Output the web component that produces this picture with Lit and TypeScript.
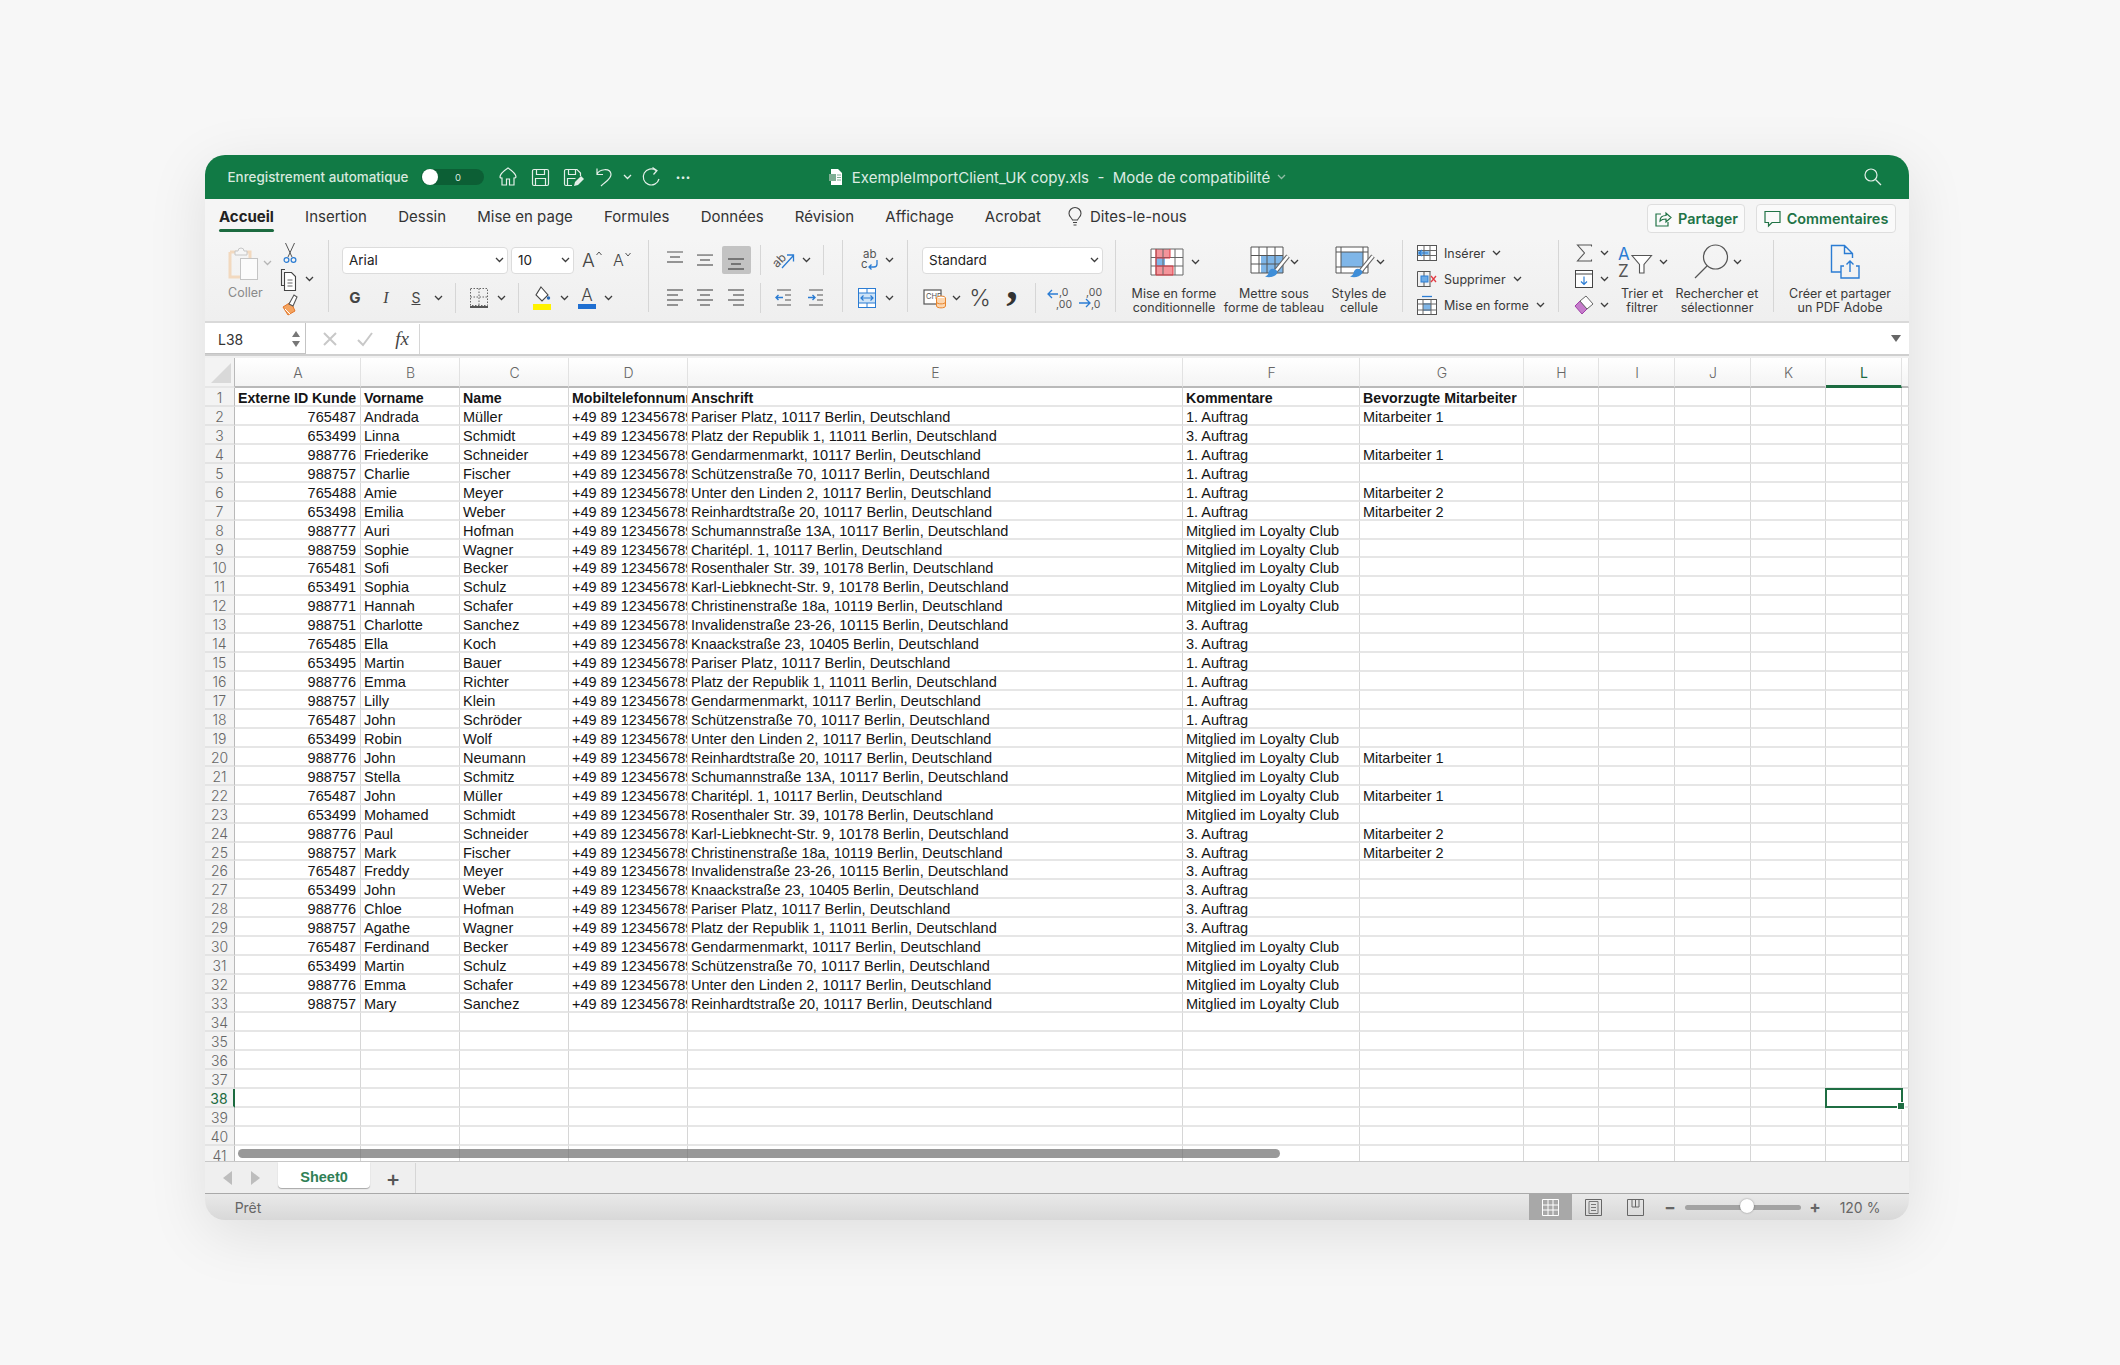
import { LitElement, html, svg, css, TemplateResult } from "lit";
import { customElement } from "lit/decorators.js";

type Slot = [number, number, TemplateResult | string];

// places items by their centre x, in flow, using margins worked out from the previous item
const slots = (left: number, items: Slot[]) => {
  let cur = left;
  return items.map(([cx, w, t]) => {
    const ml = cx - w / 2 - cur;
    cur = cx + w / 2;
    return html`<span class="slot" style="margin-left:${ml}px;width:${w}px">${t}</span>`;
  });
};

const chevOf = (color: string) => html`<svg width="9" height="6" viewBox="0 0 9 6"><path d="M1 1l3.5 3.5L8 1" fill="none" stroke=${color} stroke-width="1.3"/></svg>`;
const chev = chevOf("#3d3d3d");
const sep = html`<i class="sep"></i>`;

const lines = (rows: [number, number, number][], color = "#555") => html`<svg width="20" height="22" viewBox="0 0 20 22">${rows.map(
  ([y, x1, x2]) => svg`<path d="M${x1} ${y}H${x2}" stroke=${color} stroke-width="1.2"/>`)}</svg>`;

const alignTop = lines([[3, 2, 18], [8, 5, 15], [13, 2, 18]]);
const alignMid = lines([[6, 2, 18], [11, 5, 15], [16, 2, 18]]);
const alignBot = lines([[10, 2, 18], [15, 5, 15], [20, 2, 18]], "#444");
const alignL = lines([[3, 2, 18], [8, 2, 13], [13, 2, 18], [18, 2, 13]]);
const alignC = lines([[3, 2, 18], [8, 5, 15], [13, 2, 18], [18, 5, 15]]);
const alignR = lines([[3, 2, 18], [8, 7, 18], [13, 2, 18], [18, 7, 18]]);

const indentL = html`<svg width="20" height="22" viewBox="0 0 20 22"><path d="M3 3h14M11 8h6M11 13h6M3 18h14" stroke="#555" stroke-width="1.2"/><path d="M9 10.5H2M4.5 8l-2.5 2.5L4.5 13" fill="none" stroke="#2b7cd3" stroke-width="1.4"/></svg>`;
const indentR = html`<svg width="20" height="22" viewBox="0 0 20 22"><path d="M3 3h14M11 8h6M11 13h6M3 18h14" stroke="#555" stroke-width="1.2"/><path d="M2 10.5h7M6.5 8L9 10.5 6.5 13" fill="none" stroke="#2b7cd3" stroke-width="1.4"/></svg>`;

const orient = html`<svg width="24" height="24" viewBox="0 0 24 24"><text x="0" y="17" font-size="12" fill="#555" font-family="Inter" transform="rotate(-45 6 14)">ab</text><path d="M9 20L20 8M14 7h6.5v6.5" fill="none" stroke="#2b7cd3" stroke-width="1.3"/></svg>`;
const wrap = html`<svg width="18" height="24" viewBox="0 0 18 24"><text x="2" y="10" font-size="11.5" fill="#555" font-family="Inter">ab</text><text x="0" y="20" font-size="11.5" fill="#555" font-family="Inter">c</text><path d="M16 12v4q0 3-3 3H8M10.5 16.5L8 19l2.5 2.5" fill="none" stroke="#2b7cd3" stroke-width="1.3"/></svg>`;
const merge = html`<svg width="18" height="20" viewBox="0 0 18 20"><rect x=".5" y=".5" width="17" height="19" fill="#fff" stroke="#2b7cd3"/><rect x="1" y="5" width="16" height="10" fill="#cfe4f7"/><path d="M.5 5h17M.5 15h17M9 .5v4.500M9 15v4.500" stroke="#2b7cd3"/><path d="M3 10h12M5.500 7.500L3 10l2.500 2.500M12.500 7.500L15 10l-2.500 2.500" fill="none" stroke="#2b7cd3" stroke-width="1.2"/></svg>`;

const paste = html`<svg width="34" height="34" viewBox="0 0 34 34"><path d="M4 6h7M21 6h3v6M4 6v25h10" fill="none" stroke="#f2d9bf" stroke-width="3"/><path d="M9 5h3a3 3 0 0 1 6 0h3v4H9z" fill="#f6f6f6" stroke="#c6c6c6"/><rect x="14.500" y="12.500" width="17" height="21" fill="#fbfbfb" stroke="#c4c4c4"/></svg>`;
const scissors = html`<svg width="16" height="22" viewBox="0 0 16 22"><path d="M3.500 1l6.500 14M12.500 1L6 15" fill="none" stroke="#555" stroke-width="1"/><circle cx="4.500" cy="18" r="2.400" fill="none" stroke="#2b7cd3" stroke-width="1.200"/><circle cx="11.500" cy="18" r="2.400" fill="none" stroke="#2b7cd3" stroke-width="1.200"/></svg>`;
const copy = html`<svg width="18" height="24" viewBox="0 0 18 24"><path d="M5 2.500H1.500v16H5" fill="none" stroke="#444" stroke-width="1.1"/><path d="M4.500 5.500h7l4 4v14h-11z" fill="#fff" stroke="#444" stroke-width="1.1"/><path d="M7.500 13h5M7.500 16h5M7.500 19h5" stroke="#666"/></svg>`;
const painter = html`<svg width="20" height="24" viewBox="0 0 20 24"><path d="M11 9l-8 5 5 8 7-4z" fill="#f4a35f" stroke="#e2762a"/><path d="M9 11l5-9 3 2-4 9z" fill="#fff" stroke="#555" stroke-width="1.1"/><path d="M5 16l5 5" stroke="#fff"/></svg>`;

const fill = html`<svg width="20" height="26" viewBox="0 0 20 26"><path d="M9 2l7 8-6 6-6-6z" fill="#fff" stroke="#444" stroke-width="1.100"/><circle cx="16.500" cy="13" r="1.700" fill="#2b6cb8"/><rect x="1" y="19" width="18" height="6" fill="#fff200"/></svg>`;
const borders = html`<svg width="20" height="22" viewBox="0 0 20 22"><path d="M1.500 1.500h17v17h-17zM10 1.500v17M1.500 10h17" fill="none" stroke="#666" stroke-dasharray="1.500 1.500"/><path d="M1 20h18" stroke="#222" stroke-width="1.500"/></svg>`;

const currency = html`<svg width="24" height="22" viewBox="0 0 24 22"><rect x="1" y="3" width="17" height="14" fill="#fff" stroke="#555" stroke-width="1.200"/><text x="3" y="12" font-size="7.500" fill="#555" font-family="Inter">CHF</text><ellipse cx="18" cy="11" rx="4.500" ry="2" fill="#fff" stroke="#e8842c"/><path d="M13.500 11v8c0 2.500 9 2.500 9 0v-8M13.500 15c0 2.500 9 2.500 9 0" fill="#fbd6b0" stroke="#e8842c"/></svg>`;
const decLess = html`<svg width="24" height="24" viewBox="0 0 24 24"><text x="12" y="10" font-size="10.500" fill="#555" font-family="Inter">,0</text><text x="9" y="22" font-size="10.500" fill="#555" font-family="Inter">,00</text><path d="M11 8H1M5 4L1 8l4 4" fill="none" stroke="#2b7cd3" stroke-width="1.300"/></svg>`;
const decMore = html`<svg width="24" height="24" viewBox="0 0 24 24"><text x="8" y="10" font-size="10.500" fill="#555" font-family="Inter">,00</text><text x="13" y="22" font-size="10.500" fill="#555" font-family="Inter">,0</text><path d="M1 17h11M8 13l4 4-4 4" fill="none" stroke="#2b7cd3" stroke-width="1.300"/></svg>`;

const grid34 = svg`<path d="M1 1h32v26H1zM1 9.500h32M1 18h32M9 1v26M17 1v26M25 1v26" fill="none" stroke="#555"/>`;
const brush = svg`<path d="M38 10L25 26" stroke="#666" stroke-width="4.500"/><path d="M38 10L25 26" stroke="#fff" stroke-width="2.500"/><path d="M26 24c-4-3-7 0-7.500 3-.3 2-2 3-3.500 3.500 4 1.500 10 .5 12-3 .7-1.300 .5-2.500-1-3.500z" fill="#3f8ed8"/>`;
const condFmt = html`<svg width="34" height="28" viewBox="0 0 34 28"><rect x="1" y="1" width="32" height="26" fill="#fff"/><rect x="6" y="1" width="14" height="9" fill="#f4949a"/><rect x="6" y="10" width="9" height="8" fill="#7fb6e8"/><rect x="6" y="18" width="17" height="9" fill="#f4949a"/><path d="M1 1h32v26H1zM1 9.500h32M1 18h32M6 1v26M13 1v26M25 1v26" fill="none" stroke="#666"/><path d="M6 1v26M20 1v9M23 18v9M6 10h14M6 18h17M6 27h17" fill="none" stroke="#e23b44"/></svg>`;
const tableFmt = html`<svg width="38" height="32" viewBox="0 0 38 32"><rect x="1" y="1" width="32" height="26" fill="#fff"/><rect x="11" y="9.500" width="22" height="17.500" fill="#7fb6e8"/>${grid34}${brush}</svg>`;
const cellFmt = html`<svg width="38" height="32" viewBox="0 0 38 32"><rect x="1" y="1" width="32" height="26" fill="#fff"/><rect x="6" y="6" width="22" height="15" fill="#7fb6e8"/><path d="M1 1h32v26H1zM1 6h32M1 21h32M6 1v26M28 1v26" fill="none" stroke="#555"/>${brush}</svg>`;

const insertIc = html`<svg width="20" height="18" viewBox="0 0 20 18"><rect x=".5" y="1.500" width="19" height="15" fill="#fff" stroke="#555"/><rect x="1" y="6" width="12" height="6" fill="#8cc0ec"/><path d="M.5 6.500h19M.5 11.500h19M7 1.500v15M13 1.500v15" stroke="#666"/><path d="M11 9H2M5 6L2 9l3 3" fill="none" stroke="#2b7cd3" stroke-width="1.200"/></svg>`;
const deleteIc = html`<svg width="20" height="18" viewBox="0 0 20 18"><path d="M.5 1.500h13M.5 16.500h13M.5 1.500v15M7 1.500v15M13 1.500v15" fill="none" stroke="#555"/><rect x="4" y="6" width="7" height="6" fill="#6aaae6" stroke="#2b7cd3"/><path d="M14 6l5 6M19 6l-5 6" stroke="#e23b44" stroke-width="1.300"/></svg>`;
const formatIc = html`<svg width="20" height="20" viewBox="0 0 20 20"><rect x=".5" y="4.500" width="19" height="15" fill="#fff" stroke="#555"/><rect x="6" y="8" width="8" height="8" fill="#7fb6e8"/><path d="M.5 9h19M.5 15h19M6 4.500v15M14 4.500v15" stroke="#666"/><path d="M5 1.500h10" stroke="#2b7cd3" stroke-width="1.300"/></svg>`;
const sumIc = html`<svg width="17" height="18" viewBox="0 0 17 18"><path d="M15.500 2.500V1H1.500l7 8-7 8h14v-1.500" fill="none" stroke="#555" stroke-width="1.100"/></svg>`;
const fillDown = html`<svg width="18" height="18" viewBox="0 0 18 18"><rect x=".5" y=".5" width="17" height="17" fill="#fff" stroke="#444"/><path d="M.5 4h17" stroke="#444"/><path d="M9 6.500v8M6 11.500l3 3 3-3" fill="none" stroke="#2b7cd3" stroke-width="1.200"/></svg>`;
const eraser = html`<svg width="20" height="20" viewBox="0 0 20 20"><path d="M1 11l7 8 5-5-7-8z" fill="#c57ccb" stroke="#a03fa8"/><path d="M6 6l6-5 7 8-6 5z" fill="#fff" stroke="#666"/></svg>`;
const sortIc = html`<svg width="34" height="32" viewBox="0 0 34 32"><text x="0" y="14" font-size="17" fill="#2b7cd3" font-family="Inter">A</text><text x="0" y="31" font-size="17" fill="#555" font-family="Inter">Z</text><path d="M14 9.500h19.500l-7.500 9v8.500h-4.500v-8.500z" fill="#fff" stroke="#555" stroke-width="1.100"/></svg>`;
const searchIc = html`<svg width="36" height="36" viewBox="0 0 36 36"><circle cx="22.500" cy="13" r="12" fill="none" stroke="#555" stroke-width="1.200"/><path d="M14 22L2 34" stroke="#555" stroke-width="1.200"/></svg>`;
const pdfIc = html`<svg width="32" height="36" viewBox="0 0 32 36"><path d="M12 28H2.500V1.500h13l8 8V14M15.500 1.500v8h8" fill="none" stroke="#2b7cd3" stroke-width="1.400"/><path d="M15 22h-3v12h18V22h-3M21 28V17M17.500 20.500L21 17l3.500 3.500" fill="none" stroke="#2b7cd3" stroke-width="1.400"/></svg>`;
const bulb = html`<svg width="14" height="20" viewBox="0 0 14 20"><path d="M4.500 13C3.500 10.500 1 9.500 1 6.500a6 6 0 0 1 12 0c0 3-2.500 4-3.500 6.500zM5 15.500h4M5.500 18h3" fill="none" stroke="#444" stroke-width="1.100"/></svg>`;
const shareIc = html`<svg width="18" height="18" viewBox="0 0 18 18"><path d="M7 4H2v12h12v-4" fill="none" stroke="#217346" stroke-width="1.200"/><path d="M6 11c0-4 3-5.500 6-5.500V3l5 4.500-5 4.500V9c-2.500 0-4.500 .5-6 2z" fill="none" stroke="#217346" stroke-width="1.200"/></svg>`;
const commentIc = html`<svg width="17" height="17" viewBox="0 0 17 17"><path d="M1 1.500h15v11H8L4.500 16v-3.500H1z" fill="none" stroke="#217346" stroke-width="1.200"/></svg>`;

const wh = "#e3efe8";
const homeIc = html`<svg width="20" height="20" viewBox="0 0 20 20"><path d="M2 10c0-3 5-7 8-9 3 2 8 6 8 9 0 1-1 1-2 1v7h-4.500v-6h-3v6H4v-7c-1 0-2 0-2-1z" fill="none" stroke=${wh} stroke-width="1.200"/></svg>`;
const saveIc = html`<svg width="19" height="19" viewBox="0 0 19 19"><path d="M3 1.500h13a1.500 1.500 0 0 1 1.500 1.500v13a1.500 1.500 0 0 1-1.500 1.500H3A1.500 1.500 0 0 1 1.500 16V3A1.500 1.500 0 0 1 3 1.500zM5.500 1.500v5h8v-5M4.500 17.500v-7h10v7" fill="none" stroke=${wh} stroke-width="1.200"/></svg>`;
const saveAsIc = html`<svg width="21" height="19" viewBox="0 0 21 19"><path d="M9 17.500H3A1.500 1.500 0 0 1 1.500 16V3A1.500 1.500 0 0 1 3 1.500h11L17.500 5v3M5.500 1.500v5h7v-5M4.500 17v-6.500h8" fill="none" stroke=${wh} stroke-width="1.200"/><path d="M11 18l1-4 6-6 3 3-6 6z" fill=${wh}/></svg>`;
const undoIc = html`<svg width="20" height="22" viewBox="0 0 20 22"><path d="M3 8.500C5 3 16 1.500 17 8c.5 5-6 8-10 12M3 2.500v6h6" fill="none" stroke=${wh} stroke-width="1.200"/></svg>`;
const redoIc = html`<svg width="20" height="22" viewBox="0 0 20 22"><path d="M15 4.500A8 8 0 1 0 18 13M11.500 1.500L16 4.500l-3.500 4" fill="none" stroke=${wh} stroke-width="1.200"/></svg>`;
const fileIc = html`<svg width="16" height="18" viewBox="0 0 16 18"><path d="M3 1h7l4 4v12H3z" fill="#fff"/><rect x="1" y="6" width="7" height="7" fill="#7fae94"/><path d="M9 7h4M9 9.500h4M9 12h4" stroke="#7fae94"/></svg>`;
const glass = html`<svg width="20" height="20" viewBox="0 0 20 20"><circle cx="8" cy="8" r="6" fill="none" stroke=${wh} stroke-width="1.200"/><path d="M12.500 12.500L18 18" stroke=${wh} stroke-width="1.200"/></svg>`;

const people = [
  ["765487", "Andrada", "Müller"], ["653499", "Linna", "Schmidt"], ["988776", "Friederike", "Schneider"], ["988757", "Charlie", "Fischer"],
  ["765488", "Amie", "Meyer"], ["653498", "Emilia", "Weber"], ["988777", "Auri", "Hofman"], ["988759", "Sophie", "Wagner"],
  ["765481", "Sofi", "Becker"], ["653491", "Sophia", "Schulz"], ["988771", "Hannah", "Schafer"], ["988751", "Charlotte", "Sanchez"],
  ["765485", "Ella", "Koch"], ["653495", "Martin", "Bauer"], ["988776", "Emma", "Richter"], ["988757", "Lilly", "Klein"],
  ["765487", "John", "Schröder"], ["653499", "Robin", "Wolf"], ["988776", "John", "Neumann"], ["988757", "Stella", "Schmitz"],
  ["765487", "John", "Müller"], ["653499", "Mohamed", "Schmidt"], ["988776", "Paul", "Schneider"], ["988757", "Mark", "Fischer"],
  ["765487", "Freddy", "Meyer"], ["653499", "John", "Weber"], ["988776", "Chloe", "Hofman"], ["988757", "Agathe", "Wagner"],
  ["765487", "Ferdinand", "Becker"], ["653499", "Martin", "Schulz"], ["988776", "Emma", "Schafer"], ["988757", "Mary", "Sanchez"],
];
// the addresses simply repeat down the sheet
const addr = [
  "Pariser Platz, 10117 Berlin, Deutschland", "Platz der Republik 1, 11011 Berlin, Deutschland", "Gendarmenmarkt, 10117 Berlin, Deutschland",
  "Schützenstraße 70, 10117 Berlin, Deutschland", "Unter den Linden 2, 10117 Berlin, Deutschland", "Reinhardtstraße 20, 10117 Berlin, Deutschland",
  "Schumannstraße 13A, 10117 Berlin, Deutschland", "Charitépl. 1, 10117 Berlin, Deutschland", "Rosenthaler Str. 39, 10178 Berlin, Deutschland",
  "Karl-Liebknecht-Str. 9, 10178 Berlin, Deutschland", "Christinenstraße 18a, 10119 Berlin, Deutschland", "Invalidenstraße 23-26, 10115 Berlin, Deutschland",
  "Knaackstraße 23, 10405 Berlin, Deutschland",
];
const A1 = "1. Auftrag", A3 = "3. Auftrag", L = "Mitglied im Loyalty Club";
const comments = [A1, A3, A1, A1, A1, A1, L, L, L, L, L, A3, A3, A1, A1, A1, A1, L, L, L, L, L, A3, A3, A3, A3, A3, A3, L, L, L, L];
const staff: Record<number, string> = { 0: "Mitarbeiter 1", 2: "Mitarbeiter 1", 4: "Mitarbeiter 2", 5: "Mitarbeiter 2", 18: "Mitarbeiter 1", 20: "Mitarbeiter 1", 22: "Mitarbeiter 2", 23: "Mitarbeiter 2" };
const headers = ["Externe ID Kunde", "Vorname", "Name", "Mobiltelefonnummer", "Anschrift", "Kommentare", "Bevorzugte Mitarbeiter"];
const cols = ["A", "B", "C", "D", "E", "F", "G", "H", "I", "J", "K", "L", ""];
const tabs = ["Insertion", "Dessin", "Mise en page", "Formules", "Données", "Révision", "Affichage", "Acrobat"];

@customElement("app-root")
export class AppRoot extends LitElement {
  static styles = css`
    :host {
      display: block;
      width: 2120px;
      height: 1365px;
      box-sizing: border-box;
      padding: 155px 211px 0 205px;
      background: #f7f7f7;
      font-family: Inter, "Liberation Sans", sans-serif;
      color: #333;
    }
    svg { display: block; flex: none; overflow: visible; }
    .win {
      height: 1065px;
      border-radius: 20px;
      overflow: hidden;
      background: #f0f0f0;
      display: flex;
      flex-direction: column;
      box-shadow: 0 14px 60px rgba(0, 0, 0, 0.1);
    }
    .slot { display: inline-flex; align-items: center; justify-content: center; flex: none; height: 100%; white-space: nowrap; }
    .sep { display: block; width: 1px; height: 30px; background: #d6d6d6; }

    .title { height: 44px; flex: none; background: #117a45; color: #e3efe8; display: flex; align-items: center; font-size: 13px; }
    .auto { font-size: 13.4px; font-weight: 500; color: #d7e8de; }
    .toggle { width: 63px; height: 16px; border-radius: 8px; background: #0c5f35; position: relative; display: flex; align-items: center; justify-content: center; font-size: 9.5px; color: #d7e8de; padding-left: 12px; box-sizing: border-box; }
    .toggle::before { content: ""; position: absolute; left: 1px; top: 0; width: 16px; height: 16px; border-radius: 50%; background: #fff; }
    .dots { font-size: 15px; font-weight: 700; letter-spacing: 0; }
    .doc { font-size: 15px; color: #dcebe2; }

    .tabs { height: 39px; flex: none; box-sizing: border-box; padding-bottom: 4px; background: #f5f5f5; display: flex; align-items: center; font-size: 15px; color: #333; }
    .tab-row { display: flex; gap: 31.2px; padding-left: 14px; align-items: center; }
    .tab-on { font-weight: 700; color: #222; position: relative; }
    .tab-on::after { content: ""; position: absolute; left: 0; right: 0; bottom: -6px; height: 3px; border-radius: 2px; background: #1c6b40; }
    .tell { display: flex; align-items: center; gap: 8px; margin-left: -4px; }
    .spacer { flex: 1; }
    .btn { height: 29px; box-sizing: border-box; background: #fafafa; border: 1px solid #dedede; border-radius: 4px; display: flex; align-items: center; justify-content: center; gap: 6px; color: #217346; font-weight: 600; font-size: 14.4px; margin-top: 4px; }
    .share { width: 98px; margin-right: 11px; }
    .comm { width: 140px; margin-right: 13px; }

    .ribbon { height: 85px; flex: none; box-sizing: border-box; border-bottom: 2px solid #d9d9d9; background: linear-gradient(#f5f5f5, #efefef); display: flex; padding-top: 2px; font-size: 12.5px; color: #3a3a3a; }
    .grp { height: 72px; flex: none; box-sizing: border-box; border-right: 1px solid #d6d6d6; display: flex; flex-direction: column; }
    .grp:last-child { border: 0; }
    .g-clip { width: 124px; flex-direction: row; }
    .g-font { width: 320px; }
    .g-align { width: 194px; }
    .g-wrap { width: 65px; }
    .g-num { width: 208px; }
    .g-style { width: 287px; }
    .g-cells { width: 156px; }
    .g-edit { width: 215px; flex-direction: row; }
    .g-pdf { width: 135px; }
    .r1 { height: 40px; flex: none; display: flex; box-sizing: border-box; }
    .low { padding-top: 4px; }
    .r2 { height: 34px; flex: none; display: flex; padding-top: 1px; box-sizing: border-box; }
    .r3 { height: 26px; flex: none; display: flex; }
    .r-lab { display: flex; flex: none; margin-top: 7px; }
    .clip-l { width: 75px; flex: none; display: flex; flex-direction: column; }
    .clip-r { width: 49px; flex: none; display: flex; flex-direction: column; }
    .edit-l { width: 53px; flex: none; display: flex; flex-direction: column; }
    .edit-r { flex: 1; display: flex; flex-direction: column; }
    .paste { height: 46px; flex: none; display: flex; }
    .coller { color: #8a8a8a; font-size: 12.5px; line-height: 14px; margin-left: 23px; }
    .lab { display: block; text-align: center; line-height: 14px; font-size: 12.5px; color: #3a3a3a; white-space: normal; }
    .cell-t { width: 100%; text-align: left; }
    .combo { width: 100%; height: 27px; box-sizing: border-box; background: #fff; border: 1px solid #dcdcdc; border-radius: 4px; display: flex; align-items: center; justify-content: space-between; padding: 0 3px 0 6px; font-size: 13.5px; color: #222; }
    .grow { font-weight: 300; color: #444; display: flex; align-items: flex-start; gap: 1px; line-height: 1; }
    .big-a { font-size: 19px; }
    .small-a { font-size: 16px; }
    .pick { background: #c3c3c3; height: 28px; display: flex; align-items: center; justify-content: center; width: 100%; border-radius: 2px; }
    .b-g { font-weight: 700; font-size: 15px; color: #444; }
    .b-i { font-family: "Liberation Serif", serif; font-style: italic; font-size: 16px; color: #444; }
    .b-s { font-size: 14px; color: #444; text-decoration: underline; }
    .col-a { display: flex; flex-direction: column; width: 18px; align-items: center; font-size: 17px; line-height: 16px; color: #444; font-weight: 300; }
    .col-a i { display: block; width: 18px; height: 5px; margin-top: 1px; background: #1f6fd1; }
    .pct { font-size: 23px; font-weight: 300; color: #444; }
    .comma { font-family: "Liberation Serif", serif; font-weight: 700; font-size: 46px; color: #333; line-height: 1; transform: translateY(-14px); }

    .fbar { height: 33px; flex: none; box-sizing: border-box; background: #fff; border-bottom: 2px solid #cfcfcf; display: flex; align-items: center; }
    .namebox { width: 101px; height: 100%; box-sizing: border-box; border-right: 1px solid #c4c4c4; border-bottom: 1px solid #c4c4c4; background: #fff; display: flex; align-items: center; justify-content: space-between; padding: 2px 5px 0 13px; font-size: 14px; color: #333; }
    .step { display: flex; flex-direction: column; gap: 4px; }
    .fx { font-family: "Liberation Serif", serif; font-style: italic; font-size: 19px; color: #444; }

    .sheet { height: 804px; flex: none; margin-top: 2px; background: #fff; position: relative; overflow: hidden; font-family: "Liberation Sans", Arial, sans-serif; font-size: 14.5px; color: #151515; border-bottom: 1px solid #c8c8c8; box-sizing: border-box; }
    .grid { display: grid; grid-template-columns: 30px 126px 99px 109px 119px 495px 177px 164px 75px 76px 76px 75px 76px 7px; grid-template-rows: 30px repeat(41, 18.94px); }
    .c { box-sizing: border-box; border-right: 1px solid #d6d6d6; border-bottom: 2px solid #e6e6e6; overflow: clip visible; white-space: nowrap; padding: 0 3px; line-height: 20px; position: relative; }
    .c.num { text-align: right; padding-right: 4px; }
    .b { font-weight: 700; font-size: 14.2px; }
    .ch { background: linear-gradient(#fff, #f4f4f4); border-right: 1px solid #e2e2e2; border-bottom: 2px solid #b9b9b9; display: flex; align-items: center; justify-content: center; color: #666; font-size: 14px; padding: 2px 0 0 1px; font-family: Inter, "Liberation Sans", sans-serif; font-weight: 300; }
    .ch.on { color: #1c6b40; border-bottom: 3px solid #1c6b40; font-weight: 400; }
    .corner { background: #f3f3f3; border-right: 1px solid #b9b9b9; position: relative; }
    .corner::after { content: ""; position: absolute; right: 3px; bottom: 3px; border-style: solid; border-width: 0 0 20px 20px; border-color: transparent transparent #d9d9d9 transparent; }
    .rh { background: #f3f3f3; border-right: 1px solid #b9b9b9; border-bottom: 2px solid #e3e3e3; text-align: center; color: #666; padding: 0; font-family: Inter, "Liberation Sans", sans-serif; font-size: 14px; font-weight: 300; }
    .rh.on { color: #1c6b40; border-right: 2px solid #1c6b40; font-weight: 400; }
    .sel-cell { overflow: visible; }
    .sel { position: absolute; left: -1px; right: -2px; top: -1px; bottom: -2px; border: 2px solid #1f6e43; z-index: 2; }
    .sel::after { content: ""; position: absolute; right: -4px; bottom: -4px; width: 6px; height: 6px; background: #1f6e43; border: 1px solid #fff; }
    .hbar { position: absolute; left: 33px; width: 1042px; bottom: 3px; height: 9px; border-radius: 5px; background: rgba(110, 110, 110, 0.7); z-index: 3; }

    .sheets { height: 31px; flex: none; background: #efefef; display: flex; }
    .tab { align-self: flex-start; height: 26px; width: 92px; box-sizing: border-box; padding-top: 4px; background: #fff; border-radius: 0 0 4px 4px; box-shadow: 0 1px 1px rgba(0, 0, 0, 0.3); display: flex; align-items: center; justify-content: center; color: #2f8055; font-weight: 700; font-size: 14.5px; font-family: "Liberation Sans", sans-serif; }
    .plus { font-size: 22px; color: #555; font-weight: 500; }
    .tri-l { width: 0; height: 0; border: 7px solid transparent; border-left: 0; border-right: 9px solid #bdbdbd; }
    .tri-r { width: 0; height: 0; border: 7px solid transparent; border-right: 0; border-left: 9px solid #bdbdbd; }
    .status { flex: 1; min-height: 0; box-sizing: border-box; border-top: 1px solid #a9a9a9; background: linear-gradient(#e9e9e9, #d8d8d8); display: flex; align-items: center; font-size: 14px; color: #666; }
    .norm { height: 100%; background: #a8a8a8; width: 100%; display: flex; align-items: center; justify-content: center; }
    .slider { width: 100%; height: 5px; border-radius: 3px; background: #a3a3a3; position: relative; }
    .slider::after { content: ""; position: absolute; left: 55px; top: -5.500px; width: 14px; height: 14px; border-radius: 50%; background: #fff; box-shadow: 0 0 2px rgba(0, 0, 0, 0.4); }
    .sgn { font-size: 17px; font-weight: 700; color: #666; }
  `;

  private titlebar() {
    return html`<div class="title">${slots(205, [
      [318, 182, html`<span class="auto">Enregistrement automatique</span>`],
      [452, 63, html`<span class="toggle">0</span>`],
      [508, 20, homeIc], [540, 19, saveIc], [573, 21, saveAsIc], [604, 20, undoIc], [627, 9, chevOf(wh)],
      [651, 20, redoIc], [683, 16, html`<span class="dots">···</span>`],
      [836, 16, fileIc], [1061, 424, html`<span class="doc">ExempleImportClient_UK copy.xls&nbsp; - &nbsp;Mode de compatibilité</span>`],
      [1281, 9, chevOf("#8fbca4")], [1873, 20, glass],
    ])}</div>`;
  }

  private tabsRow() {
    return html`<div class="tabs">
      <div class="tab-row">
        <span class="tab-on">Accueil</span>
        ${tabs.map((t) => html`<span>${t}</span>`)}
        <span class="tell">${bulb}<span>Dites-le-nous</span></span>
      </div>
      <span class="spacer"></span>
      <div class="btn share">${shareIc}<span>Partager</span></div>
      <div class="btn comm">${commentIc}<span>Commentaires</span></div>
    </div>`;
  }

  private ribbon() {
    const combo = (t: string) => html`<span class="combo"><span>${t}</span>${chev}</span>`;
    const x = 649, n = 908, s = 1116, c = 1403, e = 1612;
    const lab = (a: string, b: string) => html`<span class="lab">${a}<br />${b}</span>`;
    const cellT = (t: string) => html`<span class="cell-t">${t}</span>`;
    return html`<div class="ribbon">
      <div class="grp g-clip">
        <div class="clip-l">
          <div class="paste">${slots(205, [[243, 34, paste], [267, 9, chevOf("#b5b5b5")]])}</div>
          <span class="coller">Coller</span>
        </div>
        <div class="clip-r">
          <div class="r3">${slots(280, [[290, 16, scissors]])}</div>
          <div class="r3">${slots(280, [[289, 18, copy], [309, 9, chev]])}</div>
          <div class="r3">${slots(280, [[290, 20, painter]])}</div>
        </div>
      </div>
      <div class="grp g-font">
        <div class="r1">${slots(329, [
          [425, 166, combo("Arial")], [542.5, 63, combo("10")],
          [592, 24, html`<span class="grow big-a">A<svg width="6" height="5" viewBox="0 0 6 5"><path d="M.5 4L3 1l2.500 3" fill="none" stroke="#555"/></svg></span>`],
          [622, 22, html`<span class="grow small-a">A<svg width="6" height="5" viewBox="0 0 6 5"><path d="M.5 1L3 4l2.500-3" fill="none" stroke="#555"/></svg></span>`],
        ])}</div>
        <div class="r2">${slots(329, [
          [355, 14, html`<span class="b-g">G</span>`], [386, 10, html`<span class="b-i">I</span>`], [416, 12, html`<span class="b-s">S</span>`], [438, 9, chev],
          [455, 1, sep], [479, 20, borders], [501, 9, chev], [518, 1, sep], [542, 20, fill], [564, 9, chev],
          [587, 18, html`<span class="col-a">A<i></i></span>`], [608, 9, chev],
        ])}</div>
      </div>
      <div class="grp g-align">
        <div class="r1">${slots(x, [
          [675, 20, alignTop], [705, 20, alignMid], [736, 29, html`<span class="pick">${alignBot}</span>`],
          [760, 1, sep], [785, 24, orient], [806, 9, chev], [823, 1, sep],
        ])}</div>
        <div class="r2">${slots(x, [[675, 20, alignL], [705, 20, alignC], [736, 20, alignR], [760, 1, sep], [784, 20, indentL], [816, 20, indentR]])}</div>
      </div>
      <div class="grp g-wrap">
        <div class="r1">${slots(843, [[870, 18, wrap], [889, 9, chev]])}</div>
        <div class="r2">${slots(843, [[867, 18, merge], [889, 9, chev]])}</div>
      </div>
      <div class="grp g-num">
        <div class="r1">${slots(n, [[1012.5, 181, combo("Standard")]])}</div>
        <div class="r2">${slots(n, [
          [935, 24, currency], [956, 9, chev], [980, 26, html`<span class="pct">%</span>`], [1012, 14, html`<span class="comma">,</span>`],
          [1035, 1, sep], [1059, 24, decLess], [1090, 24, decMore],
        ])}</div>
      </div>
      <div class="grp g-style">
        <div class="r1 low">${slots(s, [[1167, 34, condFmt], [1195, 9, chev], [1269, 38, tableFmt], [1294, 9, chev], [1354, 38, cellFmt], [1380, 9, chev]])}</div>
        <div class="r-lab">${slots(s, [
          [1174, 96, lab("Mise en forme", "conditionnelle")],
          [1274, 104, lab("Mettre sous", "forme de tableau")],
          [1359, 60, lab("Styles de", "cellule")],
        ])}</div>
      </div>
      <div class="grp g-cells">
        <div class="r3">${slots(c, [[1427, 20, insertIc], [1486, 84, cellT("Insérer")], [1496, 9, chev]])}</div>
        <div class="r3">${slots(c, [[1427, 20, deleteIc], [1486, 84, cellT("Supprimer")], [1517, 9, chev]])}</div>
        <div class="r3">${slots(c, [[1427, 20, formatIc], [1486, 84, cellT("Mise en forme")], [1540, 9, chev]])}</div>
      </div>
      <div class="grp g-edit">
        <div class="edit-l">
          <div class="r3">${slots(1559, [[1584, 17, sumIc], [1604, 9, chev]])}</div>
          <div class="r3">${slots(1559, [[1584, 18, fillDown], [1604, 9, chev]])}</div>
          <div class="r3">${slots(1559, [[1584, 20, eraser], [1604, 9, chev]])}</div>
        </div>
        <div class="edit-r">
          <div class="r1 low">${slots(e, [[1635, 34, sortIc], [1663, 9, chev], [1711, 36, searchIc], [1737, 9, chev]])}</div>
          <div class="r-lab">${slots(e, [[1642, 50, lab("Trier et", "filtrer")], [1717, 92, lab("Rechercher et", "sélectionner")]])}</div>
        </div>
      </div>
      <div class="grp g-pdf">
        <div class="r1 low">${slots(1774, [[1845, 32, pdfIc]])}</div>
        <div class="r-lab">${slots(1774, [[1840, 110, lab("Créer et partager", "un PDF Adobe")]])}</div>
      </div>
    </div>`;
  }

  private formula() {
    return html`<div class="fbar">
      <div class="namebox"><span>L38</span>
        <span class="step">
          <svg width="8" height="6" viewBox="0 0 8 6"><path d="M4 0l4 6H0z" fill="#777"/></svg>
          <svg width="8" height="6" viewBox="0 0 8 6"><path d="M0 0h8L4 6z" fill="#777"/></svg>
        </span>
      </div>
      ${slots(306, [
        [330, 14, html`<svg width="14" height="14" viewBox="0 0 14 14"><path d="M1 1l12 12M13 1L1 13" stroke="#c8c8c8" stroke-width="2"/></svg>`],
        [365, 16, html`<svg width="16" height="14" viewBox="0 0 16 14"><path d="M1 8l5 5L15 1" fill="none" stroke="#c8c8c8" stroke-width="2"/></svg>`],
        [402, 20, html`<span class="fx">fx</span>`],
        [419, 1, html`<i class="sep"></i>`],
        [1896, 10, html`<svg width="10" height="7" viewBox="0 0 10 7"><path d="M0 0h10L5 7z" fill="#666"/></svg>`],
      ])}
    </div>`;
  }

  private cellsFor(i: number) {
    // i is the 0-based data row, row number i + 2
    const p = people[i];
    const row: { t: string; num?: boolean }[] = [
      { t: p[0], num: true }, { t: p[1] }, { t: p[2] }, { t: "+49 89 123456789" },
      { t: addr[i % addr.length] }, { t: comments[i] }, { t: staff[i] ?? "" },
      { t: "" }, { t: "" }, { t: "" }, { t: "" }, { t: "" }, { t: "" },
    ];
    return row.map((c) => html`<div class="c ${c.num ? "num" : ""}">${c.t}</div>`);
  }

  private sheet() {
    const rows = [];
    for (let r = 1; r <= 41; r++) {
      rows.push(html`<div class="c rh ${r === 38 ? "on" : ""}">${r}</div>`);
      if (r === 1) {
        rows.push(...headers.map((h) => html`<div class="c b">${h}</div>`));
        rows.push(...Array.from({ length: 6 }, () => html`<div class="c"></div>`));
      } else if (r <= 33) {
        rows.push(...this.cellsFor(r - 2));
      } else {
        rows.push(...cols.map((c) => r === 38 && c === "L"
          ? html`<div class="c sel-cell"><div class="sel"></div></div>`
          : html`<div class="c"></div>`));
      }
    }
    return html`<div class="sheet">
      <div class="grid">
        <div class="c corner"></div>
        ${cols.map((c) => html`<div class="c ch ${c === "L" ? "on" : ""}">${c}</div>`)}
        ${rows}
      </div>
      <div class="hbar"></div>
    </div>`;
  }

  render() {
    return html`<div class="win">
      ${this.titlebar()}
      ${this.tabsRow()}
      ${this.ribbon()}
      ${this.formula()}
      ${this.sheet()}
      <div class="sheets">${slots(205, [
        [227, 9, html`<i class="tri-l"></i>`], [255, 9, html`<i class="tri-r"></i>`],
        [324, 92, html`<span class="tab">Sheet0</span>`],
        [393, 20, html`<span class="plus">+</span>`],
        [415, 1, html`<i class="sep"></i>`],
      ])}</div>
      <div class="status">${slots(205, [
        [248, 34, "Prêt"],
        [1550.5, 43, html`<span class="norm"><svg width="17" height="17" viewBox="0 0 17 17"><path d="M.5.500h16v16H.5zM.5 6h16M.5 11h16M6 .500v16M11 .500v16" fill="none" stroke="#fff"/></svg></span>`],
        [1593, 17, html`<svg width="17" height="17" viewBox="0 0 17 17"><path d="M.5.500h16v16H.5z" fill="none" stroke="#666"/><path d="M4 2.500h9v12H4zM6 5.500h5M6 8.500h5M6 11.500h5" fill="none" stroke="#777"/></svg>`],
        [1635, 17, html`<svg width="17" height="17" viewBox="0 0 17 17"><path d="M.5.500h16v16H.5zM5 .500V8h7V.500M8.500 .500V8" fill="none" stroke="#666"/></svg>`],
        [1670, 10, html`<span class="sgn">−</span>`],
        [1743, 116, html`<span class="slider"></span>`],
        [1815, 12, html`<span class="sgn">+</span>`],
        [1860, 44, "120 %"],
      ])}</div>
    </div>`;
  }
}
